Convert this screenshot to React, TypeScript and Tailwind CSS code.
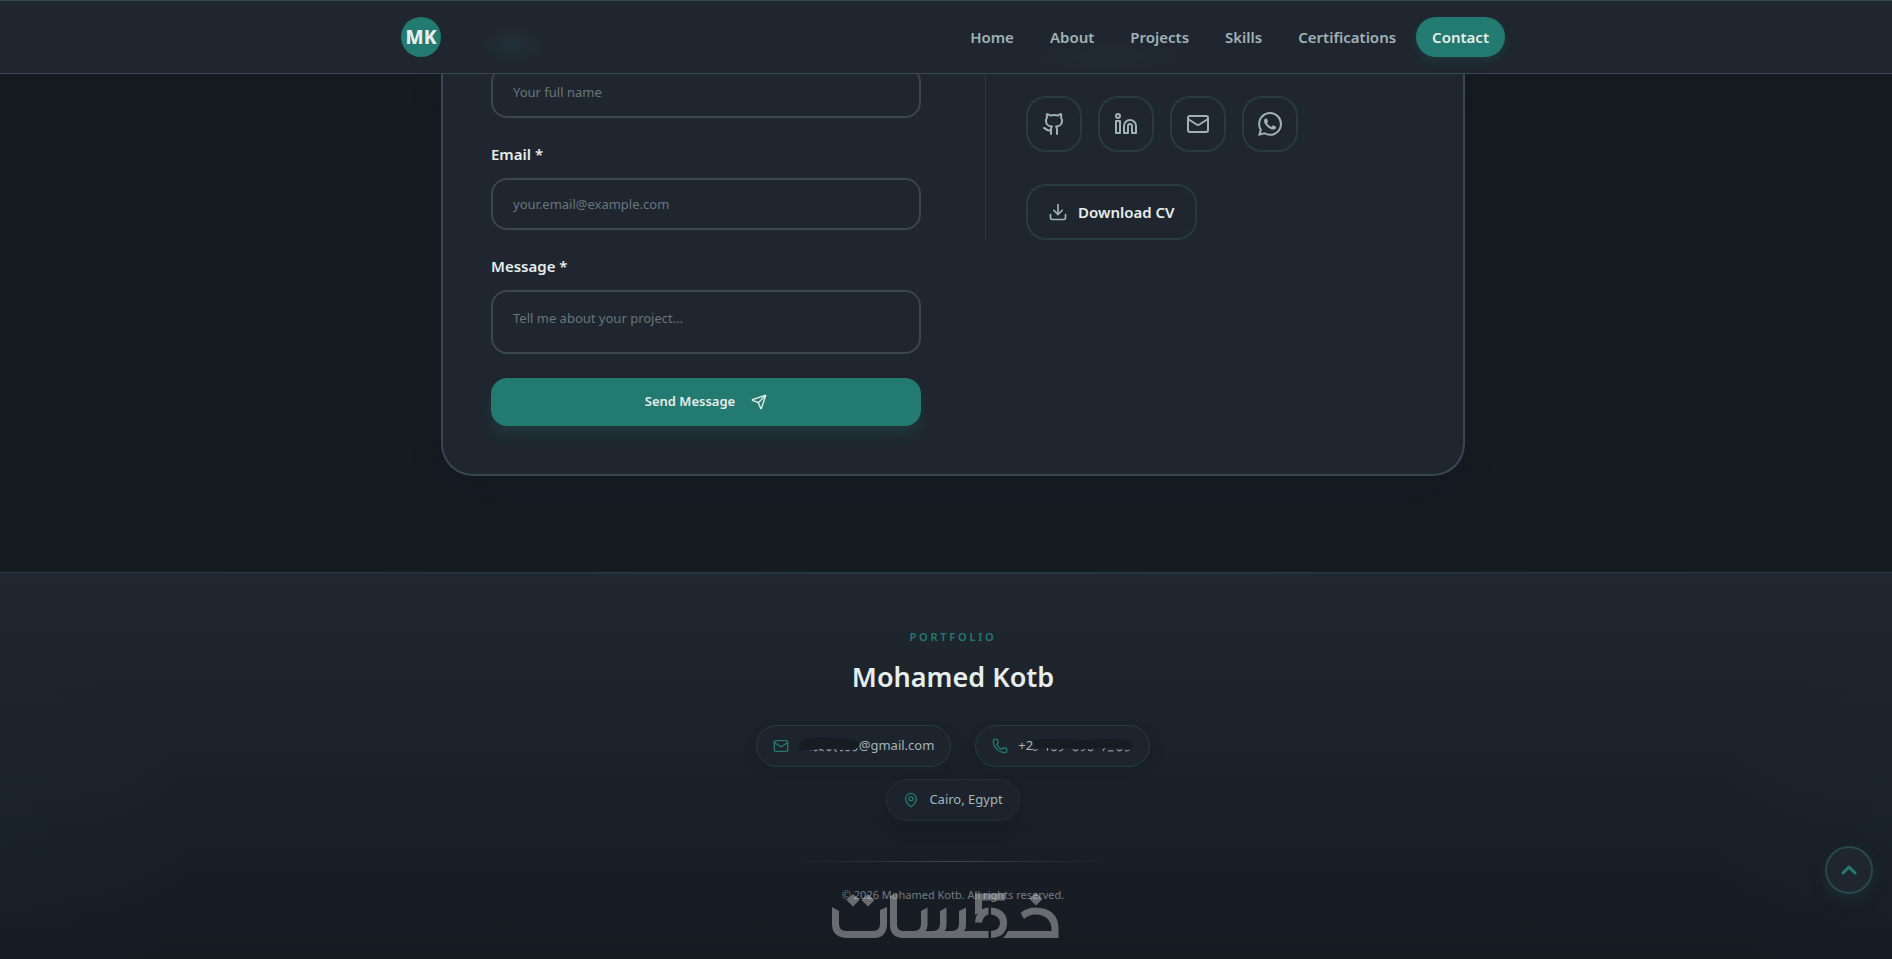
import type { ReactNode } from "react";
import { ChevronUp, Download, Github, Linkedin, Mail, MapPin, Phone, Send } from "lucide-react";
import { SiWhatsapp } from "react-icons/si";

const navItems = ["Home", "About", "Projects", "Skills", "Certifications", "Contact"];

const fieldClass =
  "block w-full rounded-2xl border-2 border-[#3b474f] bg-transparent px-5 text-[13px] leading-5 text-[#e6eded] placeholder:text-[#69757a] focus:outline-none focus:border-[#227a70]";

const socials: { label: string; href: string; icon: ReactNode }[] = [
  { label: "GitHub", href: "#github", icon: <Github size={24} /> },
  { label: "LinkedIn", href: "#linkedin", icon: <Linkedin size={24} /> },
  { label: "Email", href: "#email", icon: <Mail size={24} /> },
  { label: "WhatsApp", href: "#whatsapp", icon: <SiWhatsapp size={24} /> },
];

function Header() {
  return (
    <header className="sticky top-0 z-20 overflow-hidden border-y border-[#3b474f] bg-[#1f262f]">
      <div className="relative mx-auto flex h-[72px] max-w-6xl items-center justify-between px-6">
        <span className="pointer-events-none absolute left-[104px] top-6 h-10 w-16 rounded-full bg-[radial-gradient(closest-side,rgba(45,110,115,0.14),transparent)]" />
        <span className="pointer-events-none absolute left-[652px] top-10 h-8 w-40 rounded-full bg-[radial-gradient(closest-side,rgba(45,110,115,0.08),transparent)]" />
        <a
          href="#home"
          className="flex size-10 items-center justify-center rounded-full bg-[#227a70] text-[19px] font-extrabold text-[#e6eded]"
        >
          MK
        </a>
        <nav className="relative flex gap-1">
          {navItems.map((item) => (
            <a
              key={item}
              href={`#${item.toLowerCase()}`}
              className={
                item === "Contact"
                  ? "flex h-10 items-center rounded-full bg-[#227a70] px-4 text-[15px] font-semibold text-[#e6eded] shadow-[0_4px_8px_rgba(34,122,112,0.2)]"
                  : "flex h-10 items-center rounded-full px-4 text-[15px] font-semibold text-[#9fb2b6]"
              }
            >
              {item}
            </a>
          ))}
        </nav>
      </div>
    </header>
  );
}

function ContactForm() {
  return (
    <form className="flex flex-col gap-6" onSubmit={(e) => e.preventDefault()}>
      <input aria-label="Name" type="text" placeholder="Your full name" className={`${fieldClass} h-[52px]`} />
      <div>
        <label htmlFor="email" className="mb-3 block text-[15px] font-semibold leading-6 text-[#e6eded]">
          Email *
        </label>
        <input id="email" type="email" placeholder="your.email@example.com" className={`${fieldClass} h-[52px]`} />
      </div>
      <div>
        <label htmlFor="message" className="mb-3 block text-[15px] font-semibold leading-6 text-[#e6eded]">
          Message *
        </label>
        <textarea
          id="message"
          placeholder="Tell me about your project..."
          className={`${fieldClass} h-16 resize-none overflow-hidden py-4`}
        />
      </div>
      <button
        type="submit"
        className="flex h-12 items-center justify-center gap-4 rounded-2xl bg-[#227a70] text-[13px] font-semibold text-[#e6eded] shadow-[0_10px_15px_-3px_rgba(34,122,112,0.25)]"
      >
        Send Message
        <Send size={16} />
      </button>
    </form>
  );
}

function ContactLinks() {
  return (
    <div className="self-start border-l border-[#263b42] pl-10 pt-[30px]">
      <div className="flex gap-4">
        {socials.map((s) => (
          <a
            key={s.label}
            href={s.href}
            aria-label={s.label}
            className="flex size-14 items-center justify-center rounded-[20px] border-2 border-[#263b42] text-[#9fb2b6]"
          >
            {s.icon}
          </a>
        ))}
      </div>
      <a
        href="#cv"
        className="mt-8 inline-flex h-14 items-center gap-2.5 rounded-[20px] border-2 border-[#263b42] px-5 align-top text-[15px] font-semibold text-[#e6eded]"
      >
        <Download size={20} className="text-[#9fb2b6]" />
        Download CV
      </a>
    </div>
  );
}

/* The private part of the address, brushed over. */
function MaskedAddress() {
  return (
    <svg width="60" height="18" viewBox="1 0 60 18" aria-hidden="true">
      <path
        d="M13 13v.6M16 13.2q2 1.2 3.500-.4M22 11v3M23 12l2.500 2M29 12.500q2 2 4 0M37 12v1.500q.5 1 2 .5M42 13.600h3M47.500 13.600h4M55 13.500q4 1 4-3"
        fill="none"
        stroke="#8797a0"
        strokeWidth="1.200"
      />
      <path
        d="M3 9.500C8 5.500 18 4 30 4.500S52 5 57 7.500"
        fill="none"
        stroke="#171c23"
        strokeWidth="8"
        strokeLinecap="round"
      />
      <path d="M4 10.500 12 9 35 8 56 8.500" fill="none" stroke="#171c23" strokeWidth="6.500" strokeLinecap="round" />
    </svg>
  );
}

/* The private part of the number, brushed over. */
function MaskedNumber() {
  return (
    <svg width="100" height="18" viewBox="0 0 100 18" aria-hidden="true">
      <path
        d="M0 12q2.500 3 4.500 0M14.500 11v3M18.500 12.500q2.500 2.500 5 0M26 13.800q3 .5 4-2M40 12.500q2.500 2.500 5 0M48 13.600q3 .5 4-2M55 12.500q2.500 2.500 5 0M70 14l1.500-3M75 13.800h5.500M84 12.500q2.500 2.500 5 0M92 13.500q3 1 4.500-1"
        fill="none"
        stroke="#8797a0"
        strokeWidth="1.200"
      />
      <path
        d="M2 7C20 5 45 8 60 7S88 6 95 8"
        fill="none"
        stroke="#171c23"
        strokeWidth="9"
        strokeLinecap="round"
      />
    </svg>
  );
}

function Pill({ icon, faint, children }: { icon: ReactNode; faint?: boolean; children: ReactNode }) {
  return (
    <span
      className={
        faint
          ? "flex h-[42px] items-center gap-2.5 rounded-full border border-[#232f38] bg-[#1d232c] px-4 text-[13px] text-[#a3b5b9] shadow-[0_8px_16px_rgba(20,20,28,0.12)]"
          : "flex h-[42px] items-center gap-2.5 rounded-full border border-[#263b42] bg-[#1e242d] px-4 text-[13px] text-[#a3b5b9] shadow-[0_8px_16px_rgba(20,20,28,0.12)]"
      }
    >
      <span className="text-[#227a70]">{icon}</span>
      <span className="flex items-center">{children}</span>
    </span>
  );
}

function Watermark() {
  return (
    <svg
      className="pointer-events-none absolute -top-[7px] left-1/2 -ml-[127px]"
      width="240"
      height="62"
      viewBox="0 0 240 62"
      aria-hidden="true"
    >
      <g opacity="0.35" fill="#fff" stroke="none">
        <path d="M6 28 L13 32 V45 Q13 52 20 52 H47 Q54 52 54 45 V31 L61 28 V46 Q60 59 48 59 H20 Q6 58 6 45Z" />
        <path d="M27 15 L33.500 21 27 27.500 20.500 21Z M42 15 L48.500 21 42 27.500 35.500 21Z" />
        <path d="M64 17 L71 14.500 V45 Q71 52 77 52 H88 Q95 52 95 45 V32 L101.500 28.500 V46 Q101.500 50 99.500 52 H107 Q114 52 114 45 V32 L120.500 28.500 V46 Q120.500 50 118.500 52 H126 Q133 52 133 45 V32 L140 28.500 V46 Q140 50 138 52 H162.500 V59 H76 Q64 58 64 46Z" />
        <path d="M149 14.500 H179 V21.500 H156 V32 L149 36Z" />
        <path d="M149 43.500 Q150 30 162.500 28.500 V35.500 Q157 37 156 43.500Z" />
        <path d="M165 28.500 Q181 30 181 44 Q181 58 165 59 V52 Q174 51 174 44 Q174 37 165 35.500Z" />
        <path d="M194.500 34 Q201 28.500 209 28.500 Q232.500 29 232.500 50 V59 H177 Q180 56 182 52 H225.500 V50 Q225 36 209 35.500 Q203 35.500 198 40Z" />
        <path d="M210 14 L216.500 20 210 26.500 203.500 20Z" />
      </g>
    </svg>
  );
}

function Footer() {
  return (
    <footer className="relative flex grow flex-col items-center border-t border-[#26393f] bg-[radial-gradient(circle_200px_at_0px_270px,rgba(34,122,112,0.035),transparent),radial-gradient(circle_200px_at_100%_270px,rgba(34,122,112,0.035),transparent),linear-gradient(to_bottom,#20272f,#161b22)] px-6 pb-14 pt-14">
      <div className="absolute inset-x-0 top-0 h-px bg-[linear-gradient(to_right,transparent_10%,#26393f_50%,transparent_90%)]" />
      <p className="text-[11px] font-semibold leading-4 tracking-[0.25em] text-[#227a70]">PORTFOLIO</p>
      <h2 className="mt-3.5 text-[27px] font-semibold leading-9 text-[#e6eded]">Mohamed Kotb</h2>
      <address className="mt-[30px] flex max-w-md flex-wrap justify-center gap-x-6 gap-y-3 not-italic">
        <Pill icon={<Mail size={16} />}>
          <MaskedAddress />
          @gmail.com
        </Pill>
        <Pill icon={<Phone size={16} />}>
          +2
          <MaskedNumber />
        </Pill>
        <Pill faint icon={<MapPin size={16} />}>
          Cairo, Egypt
        </Pill>
      </address>
      <div className="mt-10 h-px w-80 bg-[linear-gradient(to_right,transparent,#3b474f,transparent)]" />
      <div className="relative mt-6 w-full text-center">
        <p className="text-[11px] leading-[18px] text-[#717c80]">© 2026 Mohamed Kotb. All rights reserved.</p>
        <Watermark />
      </div>
    </footer>
  );
}

export default function App() {
  return (
    <div className="overflow-x-clip bg-[#161b22] font-['Noto_Sans','Open_Sans',sans-serif]">
      {/* The page runs on beneath the 14px scrollbar gutter. */}
      <div className="-mr-3.5 flex min-h-screen flex-col">
        <Header />
        <main className="px-6 pb-24">
          <section className="mx-auto -mt-2 grid max-w-5xl grid-cols-2 gap-16 rounded-b-[32px] border-2 border-t-0 border-[#3b474f] bg-[#1f262f] px-12 pb-12 shadow-[0_14px_30px_rgba(10,20,20,0.16)]">
            <ContactForm />
            <ContactLinks />
          </section>
        </main>
        <Footer />
      </div>
      <button
        type="button"
        aria-label="Back to top"
        className="fixed bottom-[65px] right-[19px] z-20 flex size-12 items-center justify-center rounded-full border-2 border-[#27494d] bg-[#1f262f] text-[#227a70] shadow-[0_6px_14px_rgba(34,60,70,0.4)]"
      >
        <ChevronUp size={24} strokeWidth={3} />
      </button>
    </div>
  );
}
